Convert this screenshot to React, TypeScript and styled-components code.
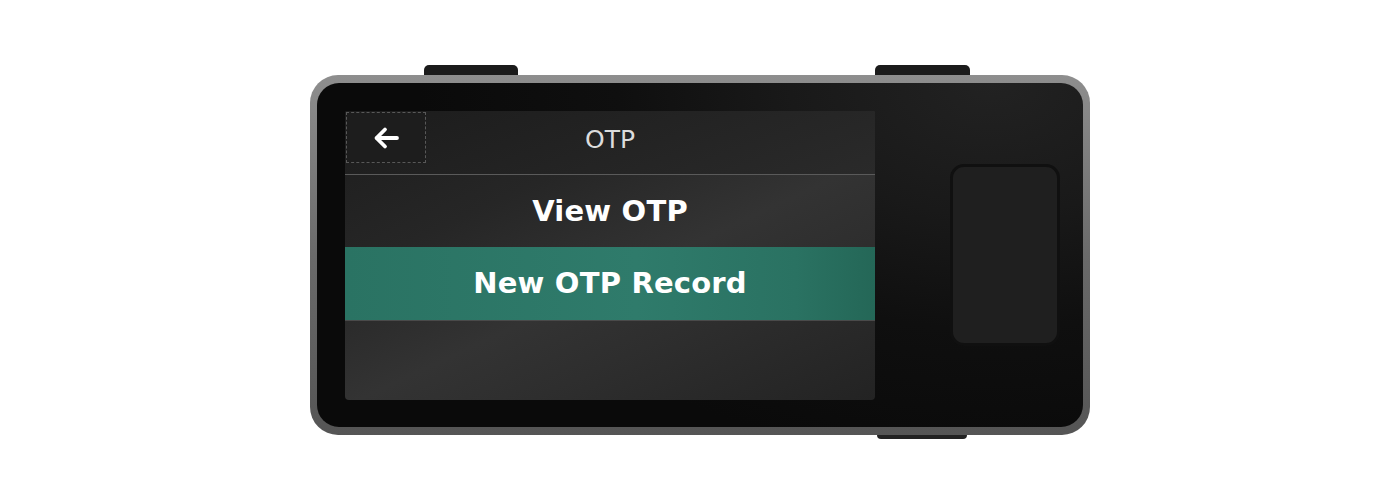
import React from "react";
import styled, { createGlobalStyle } from "styled-components";

const Global = createGlobalStyle`
  html, body { margin: 0; padding: 0; background: #ffffff; }
  body { font-family: "DejaVu Sans", "Liberation Sans", sans-serif; }
`;

const Page = styled.div`
  width: 1400px;
  height: 500px;
  display: flex;
  justify-content: center;
  padding-top: 65px;
  box-sizing: border-box;
`;

const DeviceColumn = styled.div`
  width: 780px;
  display: flex;
  flex-direction: column;
`;

const Rail = styled.div<{ $top?: boolean }>`
  display: flex;
  height: ${(p) => (p.$top ? "10px" : "4px")};
  align-items: ${(p) => (p.$top ? "flex-end" : "flex-start")};
`;

const Key = styled.div<{ $left: number; $width: number; $top?: boolean }>`
  margin-left: ${(p) => p.$left}px;
  width: ${(p) => p.$width}px;
  height: ${(p) => (p.$top ? "10px" : "4px")};
  background: ${(p) => (p.$top ? "#1b1b1b" : "#222")};
  border-radius: ${(p) => (p.$top ? "5px 5px 0 0" : "0 0 8px 8px")};
`;

const Frame = styled.div`
  height: 360px;
  box-sizing: border-box;
  padding: 8px 7px 8px 7px;
  border-radius: 28px;
  background: linear-gradient(180deg, #8e8e8e 0%, #6a6a6a 50%, #555555 100%);
  display: flex;
`;

const Body = styled.div`
  flex: 1;
  border-radius: 22px;
  background: radial-gradient(ellipse 75% 110% at 88% 0%, #222222 0%, #191919 35%, #0f0f0f 65%, #0a0a0a 100%);
  display: flex;
  align-items: center;
  padding: 0 23px 0 28px;
`;

const Screen = styled.div`
  width: 530px;
  height: 289px;
  border-radius: 2px 2px 4px 4px;
  overflow: hidden;
  background: linear-gradient(155deg, #1d1d1d 0%, #262626 30%, #333333 55%, #2e2e2e 70%, #232323 100%);
  display: flex;
  flex-direction: column;
`;

const Header = styled.div`
  height: 64px;
  padding: 1px;
  box-sizing: border-box;
  display: grid;
  grid-template-columns: 80px 1fr 80px;
  align-items: start;
  border-bottom: 1px solid #5a5a5a;
  background: linear-gradient(160deg, #1c1c1c 0%, #232323 50%, #2a2a2a 100%);
`;

const BackButton = styled.button`
  width: 80px;
  height: 51px;
  border: 1px dashed #585858;
  background: #1d1d1d;
  display: flex;
  align-items: center;
  justify-content: center;
  padding: 2px 0 0 0;
  cursor: pointer;
`;

const Title = styled.div`
  height: 56px;
  display: flex;
  align-items: center;
  justify-content: center;
  font-size: 25px;
  color: #dcdcdc;
`;

const Row = styled.div<{ $active?: boolean }>`
  height: ${(p) => (p.$active ? "73px" : "72px")};
  display: flex;
  align-items: center;
  justify-content: center;
  font-weight: bold;
  font-size: 29px;
  letter-spacing: 0.2px;
  color: #ffffff;
  background: ${(p) =>
    p.$active
      ? "linear-gradient(90deg, #2a7363 0%, #2f7b6b 55%, #2a7262 85%, #246757 100%)"
      : "transparent"};
  border-bottom: ${(p) => (p.$active ? "1px solid #4a4a4a" : "none")};
`;

const Spacer = styled.div`
  flex: 1;
`;

const Gap = styled.div`
  flex: 1;
`;

const Pad = styled.div`
  width: 110px;
  height: 182px;
  box-sizing: border-box;
  border: 3px solid #101010;
  border-radius: 14px;
  background: #1f1f1f;
`;

const Arrow = () => (
  <svg width="28" height="24" viewBox="0 0 28 24" fill="none">
    <path d="M25 12H4.5M13 3.5L4.5 12l8.5 8.5" stroke="#ffffff" strokeWidth="3.8" strokeLinecap="round" strokeLinejoin="round" />
  </svg>
);

export default function App() {
  return (
    <>
      <Global />
      <Page>
        <DeviceColumn>
          <Rail $top>
            <Key $top $left={114} $width={94} />
            <Key $top $left={357} $width={95} />
          </Rail>
          <Frame>
            <Body>
              <Screen>
                <Header>
                  <BackButton aria-label="Back">
                    <Arrow />
                  </BackButton>
                  <Title>OTP</Title>
                  <div />
                </Header>
                <Row>View OTP</Row>
                <Row $active>New OTP Record</Row>
                <Spacer />
              </Screen>
              <Gap />
              <Pad />
            </Body>
          </Frame>
          <Rail>
            <Key $left={567} $width={90} />
          </Rail>
        </DeviceColumn>
      </Page>
    </>
  );
}
